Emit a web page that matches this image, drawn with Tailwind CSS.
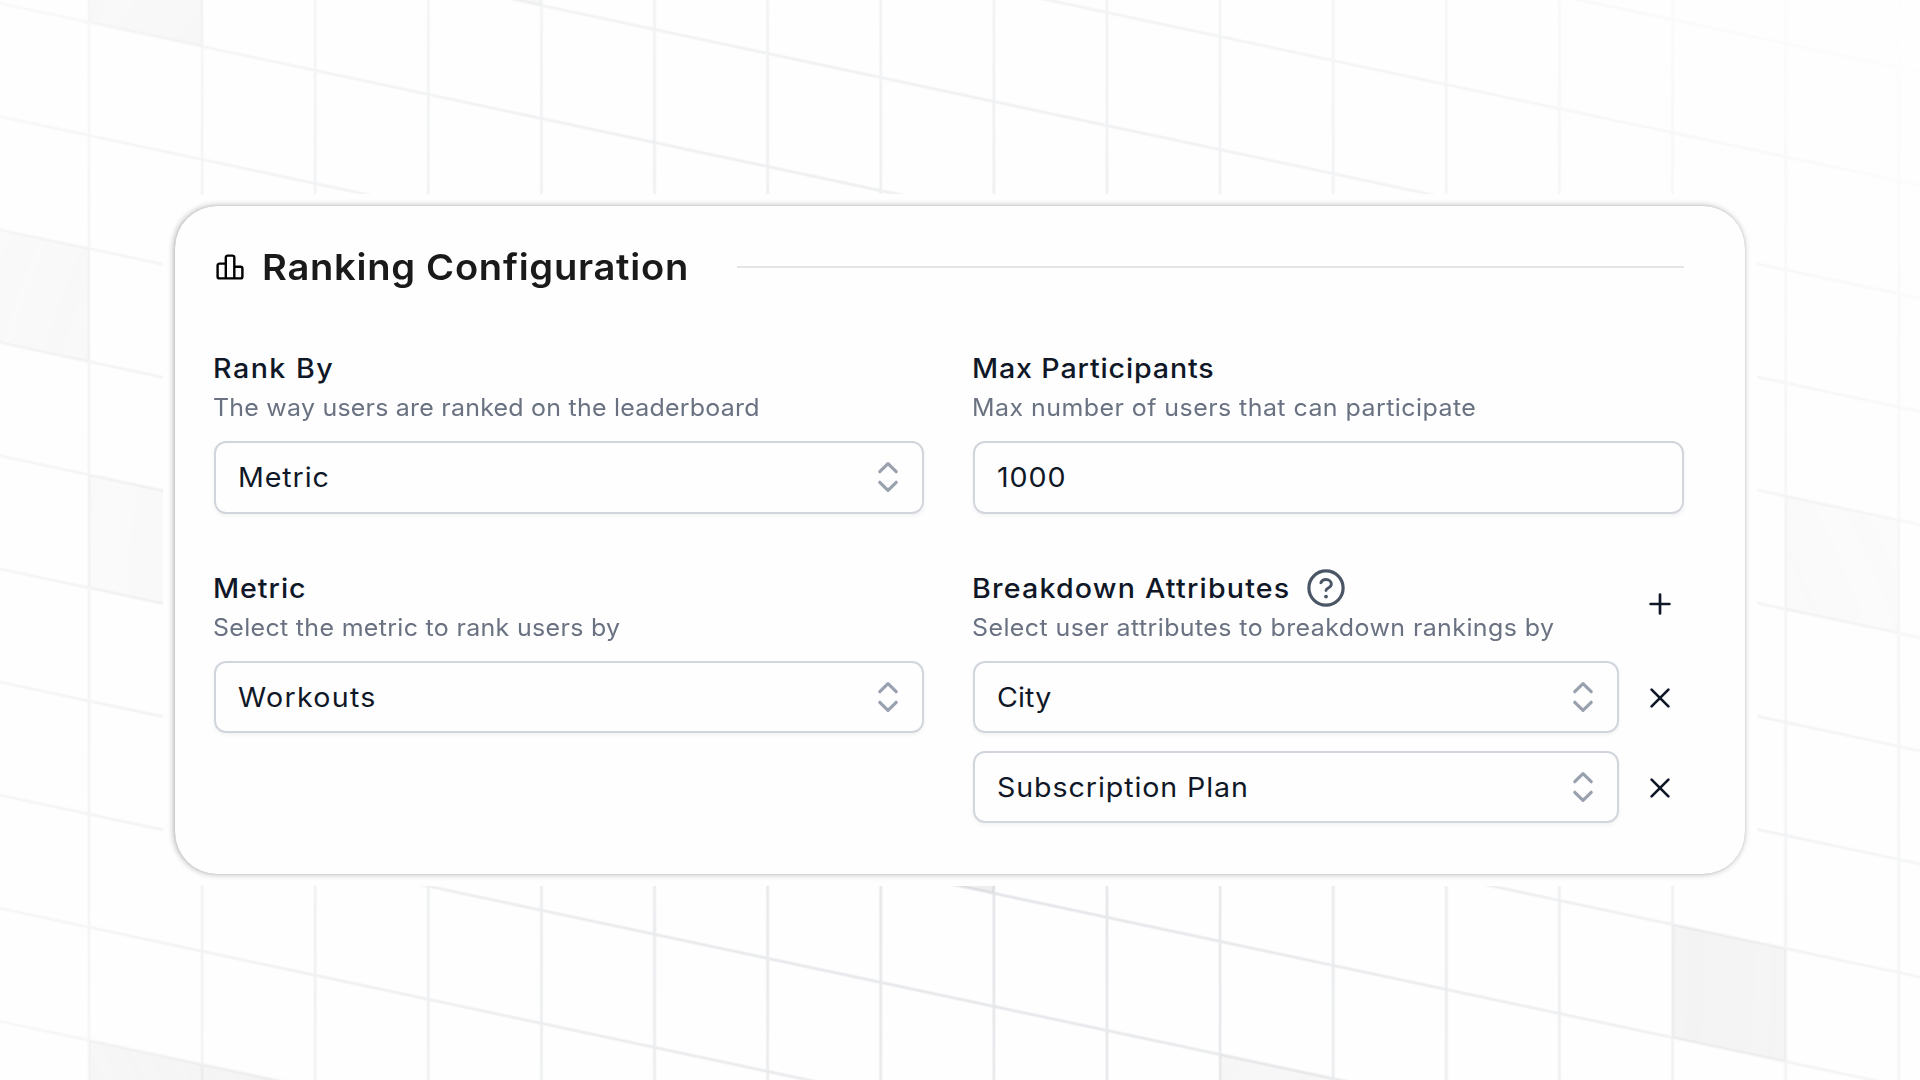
<!DOCTYPE html>
<html lang="en">
<head>
<meta charset="utf-8">
<title>Ranking Configuration</title>
<script src="https://cdn.jsdelivr.net/npm/@tailwindcss/browser@4"></script>
</head>
<body class="relative h-[1080px] w-[1920px] overflow-hidden bg-[#fefefe] font-['Inter',sans-serif] text-gray-900 antialiased">

  <!-- Skewed grid backdrop -->
  <svg class="absolute inset-0 size-full" viewBox="0 0 1920 1080" aria-hidden="true">
    <defs>
      <pattern id="grid" width="113.11" height="113.11" patternUnits="userSpaceOnUse">
        <path d="M0 0H113.11M0 113.11H113.11M0 0V113.11M113.11 0V113.11" fill="none" stroke="#9ca3af" stroke-opacity=".28" stroke-width="2.8"/>
      </pattern>
      <radialGradient id="fade" gradientUnits="userSpaceOnUse" cx="871" cy="592" r="1414">
        <stop offset="0" stop-color="#fff"/>
        <stop offset="1" stop-color="#fff" stop-opacity="0"/>
      </radialGradient>
      <mask id="fade-mask" maskUnits="userSpaceOnUse" x="-226" y="-700" width="2400" height="2200">
        <rect x="-226" y="-700" width="2400" height="2200" fill="url(#fade)"/>
      </mask>
    </defs>
    <g transform="translate(89 22.3) skewY(12)">
      <g mask="url(#fade-mask)">
        <rect x="-226.22" y="-678.66" width="2262.2" height="2036" fill="url(#grid)"/>
        <g fill="#9c9c9c" transform="scale(113.11)">
          <rect x="0" y="-1" width="1" height="1" fill-opacity=".21"/>
          <rect x="3" y="-2" width="1" height="1" fill-opacity=".2"/>
          <rect x="-1" y="2" width="1" height="1" fill-opacity=".16"/>
          <rect x="0" y="4" width="1" height="1" fill-opacity=".11"/>
          <rect x="0" y="9" width="2" height="1" fill-opacity=".24"/>
          <rect x="7" y="5" width="1" height="1" fill-opacity=".17"/>
          <rect x="10" y="7" width="1" height="1" fill-opacity=".1"/>
          <rect x="14" y="5" width="1" height="1" fill-opacity=".22"/>
          <rect x="15" y="1" width="1" height="1" fill-opacity=".12"/>
        </g>
      </g>
    </g>
  </svg>

  <svg class="hidden">
    <symbol id="chevrons" viewBox="0 0 24 34">
      <path d="M3.8 11.7 12 3.6l8.2 8.1M3.8 22.3 12 30.4l8.2-8.1" fill="none" stroke="currentColor" stroke-width="3.2" stroke-linecap="round" stroke-linejoin="round"/>
    </symbol>
    <symbol id="cross" viewBox="0 0 24 24">
      <path d="M3.6 3.6 20.4 20.4M20.4 3.6 3.6 20.4" fill="none" stroke="currentColor" stroke-width="2.7" stroke-linecap="round"/>
    </symbol>
  </svg>

  <div class="relative flex size-full items-center justify-center">
    <div class="rounded-[48px] bg-[#fefefe] p-3">
      <main class="h-[668px] w-[1570px] rounded-[42px] bg-[#fefefe] pt-[41px] pr-[61px] pl-[39px] shadow-[-1px_0_6px_rgba(0,0,0,0.32),0_0_1px_rgba(0,0,0,0.2)]">

        <header class="flex h-10 items-center">
          <svg class="ml-px size-[30px] shrink-0 text-black" viewBox="0 0 30 30" fill="none" stroke="currentColor" stroke-width="2.4" stroke-linejoin="round">
            <path d="M10.8 11.6H4.6a2 2 0 0 0-2 2v10.8a2 2 0 0 0 2 2H25.4a2 2 0 0 0 2-2V16.7a2 2 0 0 0-2-2H19.3M10.8 26.4V5.6a2 2 0 0 1 2-2h4.5a2 2 0 0 1 2 2V26.4"/>
          </svg>
          <h1 class="ml-[17px] origin-left scale-x-[1.06] text-[36px] leading-10 font-semibold tracking-[0.66px] whitespace-nowrap text-[#1a1a1a]">Ranking Configuration</h1>
          <div class="mb-px ml-auto h-0.5 w-[947px] bg-[#e5e5e6]"></div>
        </header>

        <div class="mt-[61px] grid grid-cols-[710px_711px] gap-x-[49px] gap-y-[54px]">

          <section>
            <h2 class="-ml-px origin-left translate-y-px scale-x-[1.06] text-[27px] leading-10 font-medium tracking-[1.4px]">Rank By</h2>
            <p class="-ml-px origin-left scale-x-[1.04] text-[24px] leading-10 tracking-[0.22px] text-gray-500">The way users are ranked on the leaderboard</p>
            <div class="mt-[13px] flex h-[72.5px] items-center justify-between rounded-xl border-2 border-gray-300 pr-[22px] pl-[22px] shadow-[0_2px_4px_rgba(0,0,0,0.05)]">
              <span class="origin-left translate-y-px scale-x-[1.06] text-[27px] tracking-[0.85px]">Metric</span>
              <svg class="h-[34px] w-6 text-gray-400"><use href="#chevrons"/></svg>
            </div>
          </section>

          <section>
            <h2 class="-ml-px origin-left translate-y-px scale-x-[1.06] text-[27px] leading-10 font-medium tracking-[0.8px]">Max Participants</h2>
            <p class="-ml-px origin-left scale-x-[1.04] text-[24px] leading-10 tracking-[0.43px] text-gray-500">Max number of users that can participate</p>
            <div class="mt-[13px] flex h-[72.5px] items-center rounded-xl border-2 border-gray-300 pl-[22px] shadow-[0_2px_4px_rgba(0,0,0,0.05)]">
              <span class="origin-left translate-y-px scale-x-[1.06] text-[27px] tracking-[0.9px]">1000</span>
            </div>
          </section>

          <section>
            <h2 class="-ml-px origin-left translate-y-px scale-x-[1.06] text-[27px] leading-10 font-medium tracking-[0.9px]">Metric</h2>
            <p class="-ml-px origin-left scale-x-[1.04] text-[24px] leading-10 tracking-[0.31px] text-gray-500">Select the metric to rank users by</p>
            <div class="mt-[13px] flex h-[72.5px] items-center justify-between rounded-xl border-2 border-gray-300 pr-[22px] pl-[22px] shadow-[0_2px_4px_rgba(0,0,0,0.05)]">
              <span class="origin-left translate-y-px scale-x-[1.06] text-[27px] tracking-[1.2px]">Workouts</span>
              <svg class="h-[34px] w-6 text-gray-400"><use href="#chevrons"/></svg>
            </div>
          </section>

          <section>
            <div class="flex items-center justify-between">
              <div>
                <div class="-ml-px flex h-10 items-center">
                  <h2 class="origin-left translate-y-px scale-x-[1.06] text-[27px] leading-10 font-medium tracking-[1.12px] whitespace-nowrap">Breakdown Attributes</h2>
                  <svg class="ml-[34px] size-10 text-gray-600" viewBox="0 0 40 40" fill="none" stroke="currentColor" stroke-width="3.2" stroke-linecap="round" stroke-linejoin="round">
                    <circle cx="20" cy="20" r="17.1"/>
                    <path d="M14.9 14.7C15.9 12.3 17.9 11.5 20 11.5c3 0 5.300 1.900 5.300 4.700 0 3.600-5.300 3.800-5.300 6.300" stroke-width="2.9"/>
                    <circle cx="20" cy="28.600" r="1.900" fill="currentColor" stroke="none"/>
                  </svg>
                </div>
                <p class="-ml-px origin-left scale-x-[1.04] text-[24px] leading-10 tracking-[0.4px] whitespace-nowrap text-gray-500">Select user attributes to breakdown rankings by</p>
              </div>
              <svg class="mr-3 mb-2 size-6" viewBox="0 0 24 24" fill="none" stroke="currentColor" stroke-width="2.7" stroke-linecap="round">
                <path d="M12 2.6V21.4M2.600 12H21.400"/>
              </svg>
            </div>
            <div class="mt-[13px] flex flex-col gap-[17.5px]">
              <div class="flex items-center">
                <div class="flex h-[72.5px] w-[646px] items-center justify-between rounded-xl border-2 border-gray-300 pr-[22px] pl-[22px] shadow-[0_2px_4px_rgba(0,0,0,0.05)]">
                  <span class="origin-left translate-y-px scale-x-[1.06] text-[27px] tracking-[0.13px]">City</span>
                  <svg class="h-[34px] w-6 text-gray-400"><use href="#chevrons"/></svg>
                </div>
                <svg class="mt-[2px] ml-[29px] size-6"><use href="#cross"/></svg>
              </div>
              <div class="flex items-center">
                <div class="flex h-[72.5px] w-[646px] items-center justify-between rounded-xl border-2 border-gray-300 pr-[22px] pl-[22px] shadow-[0_2px_4px_rgba(0,0,0,0.05)]">
                  <span class="origin-left translate-y-px scale-x-[1.06] text-[27px] tracking-[0.85px] whitespace-nowrap">Subscription Plan</span>
                  <svg class="h-[34px] w-6 text-gray-400"><use href="#chevrons"/></svg>
                </div>
                <svg class="mt-[2px] ml-[29px] size-6"><use href="#cross"/></svg>
              </div>
            </div>
          </section>

        </div>
      </main>
    </div>
  </div>
</body>
</html>
